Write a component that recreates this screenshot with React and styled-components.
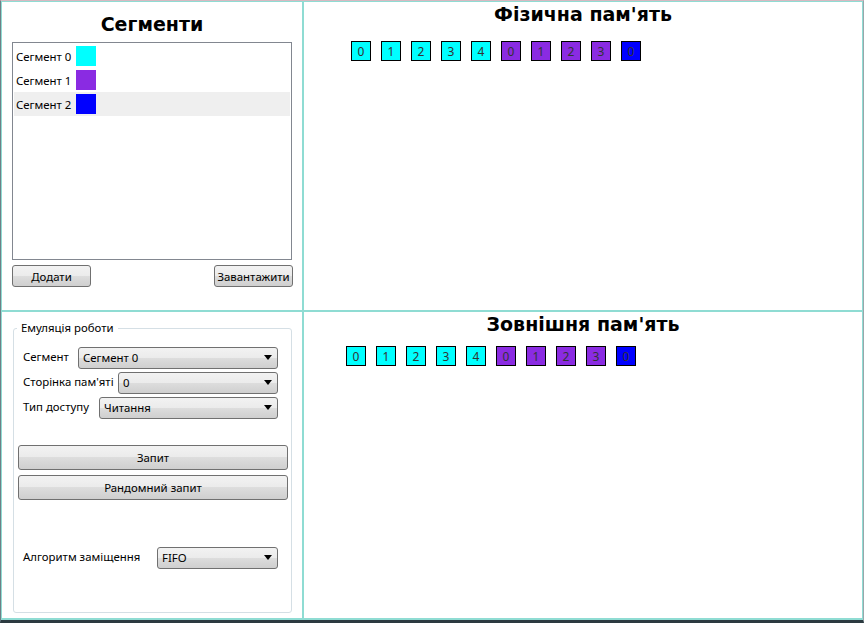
import styled, { createGlobalStyle } from "styled-components";

const GlobalStyle = createGlobalStyle`
  html, body {
    margin: 0;
    padding: 0;
    background: #ffffff;
  }
  * {
    box-sizing: border-box;
  }
`;

const segments = [
  { name: "Сегмент 0", color: "#00ffff" },
  { name: "Сегмент 1", color: "#8a2be2" },
  { name: "Сегмент 2", color: "#0000ff" },
];

const cells = [
  { n: 0, color: "#00ffff" },
  { n: 1, color: "#00ffff" },
  { n: 2, color: "#00ffff" },
  { n: 3, color: "#00ffff" },
  { n: 4, color: "#00ffff" },
  { n: 0, color: "#8a2be2" },
  { n: 1, color: "#8a2be2" },
  { n: 2, color: "#8a2be2" },
  { n: 3, color: "#8a2be2" },
  { n: 0, color: "#0000ff" },
];

const Select = ({ value }) => (
  <Combo>
    <span>{value}</span>
    <Arrow />
  </Combo>
);

const App = () => {
  return (
    <>
      <GlobalStyle />
      <Frame>
        <Window>
          <Panel>
            <Title $top={10}>Сегменти</Title>
            <ListBox>
              {segments.map((s, i) => (
                <ListItem key={s.name} $selected={i === 2}>
                  <span>{s.name}</span>
                  <Swatch $color={s.color} />
                </ListItem>
              ))}
            </ListBox>
            <ButtonRow>
              <SmallButton $w={79}>Додати</SmallButton>
              <SmallButton $w={79}>Завантажити</SmallButton>
            </ButtonRow>
          </Panel>

          <Panel>
            <Title $top={0}>Фізична пам'ять</Title>
            <CellRow $left={47} $top={15}>
              {cells.map((c, i) => (
                <Cell key={i} $color={c.color}>
                  {c.n}
                </Cell>
              ))}
            </CellRow>
          </Panel>

          <Panel>
            <GroupBox>
              <Legend>Емуляція роботи</Legend>
              <FieldRow>
                <Label>Сегмент</Label>
                <FieldBox $w={200}>
                  <Select value="Сегмент 0" />
                </FieldBox>
              </FieldRow>
              <FieldRow>
                <Label>Сторінка пам'яті</Label>
                <FieldBox $w={160}>
                  <Select value="0" />
                </FieldBox>
              </FieldRow>
              <FieldRow>
                <Label>Тип доступу</Label>
                <FieldBox $w={179}>
                  <Select value="Читання" />
                </FieldBox>
              </FieldRow>
              <BigButtons>
                <WideButton>Запит</WideButton>
                <WideButton>Рандомний запит</WideButton>
              </BigButtons>
              <AlgoRow>
                <Label>Алгоритм заміщення</Label>
                <FieldBox $w={121}>
                  <Select value="FIFO" />
                </FieldBox>
              </AlgoRow>
            </GroupBox>
          </Panel>

          <Panel>
            <Title $top={0}>Зовнішня пам'ять</Title>
            <CellRow $left={42} $top={10}>
              {cells.map((c, i) => (
                <Cell key={i} $color={c.color}>
                  {c.n}
                </Cell>
              ))}
            </CellRow>
          </Panel>
        </Window>
      </Frame>
    </>
  );
};

const Frame = styled.div`
  width: 864px;
  height: 623px;
  border-top: 1px solid #d7b9c1;
  border-left: 1px solid #6f7f86;
  border-right: 1px solid #9aa6ab;
  border-bottom: 3px solid #2c3a40;
  background: #8fdcd3;
  font-family: "Noto Sans", "Open Sans", sans-serif;
  font-size: 11.4px;
  color: #000;
`;

const Window = styled.div`
  display: grid;
  grid-template-columns: 300px 558px;
  grid-template-rows: 308px 306px;
  gap: 2px;
  padding: 1px 2px 2px 1px;
  height: 100%;
`;

const Panel = styled.div`
  background: #fff;
  position: relative;
  display: flex;
  flex-direction: column;
`;

const Title = styled.div`
  margin-top: ${(p) => p.$top}px;
  text-align: center;
  font-family: "DejaVu Sans", Verdana, sans-serif;
  font-weight: 700;
  font-size: 19px;
  line-height: 24px;
`;

const ListBox = styled.div`
  margin: 6px 10px 0 10px;
  height: 218px;
  border: 1px solid #828790;
  padding: 1px;
`;

const ListItem = styled.div`
  display: flex;
  align-items: center;
  height: 24px;
  padding-left: 2px;
  background: ${(p) => (p.$selected ? "#efefef" : "transparent")};
  span {
    width: 60px;
    white-space: nowrap;
  }
`;

const Swatch = styled.div`
  width: 20px;
  height: 20px;
  background: ${(p) => p.$color};
`;

const ButtonRow = styled.div`
  display: flex;
  justify-content: space-between;
  margin: 5px 9px 0 10px;
`;

const buttonFace = `
  border: 1px solid #707070;
  border-radius: 3px;
  background: linear-gradient(#f2f2f2 0%, #ebebeb 50%, #dddddd 50%, #cfcfcf 100%);
  font-family: inherit;
  font-size: inherit;
  color: #000;
  display: flex;
  align-items: center;
  justify-content: center;
  padding: 0;
`;

const SmallButton = styled.div`
  ${buttonFace}
  width: ${(p) => p.$w}px;
  height: 22px;
`;

const GroupBox = styled.div`
  position: relative;
  margin: 16px 10px 5px 11px;
  flex: 1;
  border: 1px solid #d5dfe5;
  border-radius: 3px;
  padding: 17px 13px 0 9px;
  display: flex;
  flex-direction: column;
`;

const Legend = styled.div`
  position: absolute;
  top: -9px;
  left: 3px;
  padding: 0 4px;
  background: #fff;
  line-height: 16px;
`;

const FieldRow = styled.div`
  display: flex;
  align-items: center;
  justify-content: space-between;
  height: 25px;
  padding-bottom: 2px;
`;

const Label = styled.div`
  white-space: nowrap;
  margin-top: -3px;
`;

const FieldBox = styled.div`
  width: ${(p) => p.$w}px;
`;

const Combo = styled.div`
  ${buttonFace}
  justify-content: space-between;
  height: 22px;
  padding: 0 5px 0 4px;
`;

const Arrow = styled.div`
  width: 0;
  height: 0;
  border-left: 4px solid transparent;
  border-right: 4px solid transparent;
  border-top: 5px solid #000;
`;

const BigButtons = styled.div`
  display: flex;
  flex-direction: column;
  gap: 5px;
  margin: 24px -10px 0 -5px;
`;

const WideButton = styled.div`
  ${buttonFace}
  height: 25px;
`;

const AlgoRow = styled(FieldRow)`
  margin-top: 46px;
`;

const CellRow = styled.div`
  display: flex;
  gap: 10px;
  margin: ${(p) => p.$top}px 0 0 ${(p) => p.$left}px;
`;

const Cell = styled.div`
  width: 20px;
  height: 20px;
  border: 1px solid #000;
  background: ${(p) => p.$color};
  color: #333;
  display: flex;
  align-items: center;
  justify-content: center;
  font-size: 12px;
`;

export default App;
